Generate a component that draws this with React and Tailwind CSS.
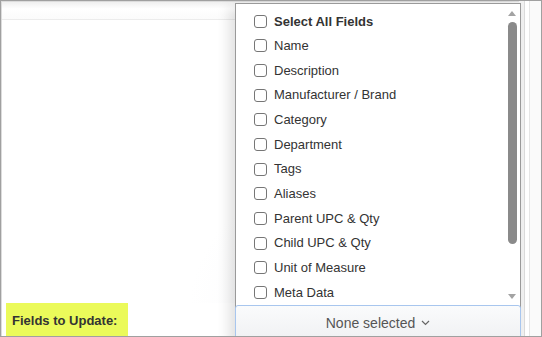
import React from "react";

const fields = [
  "Name",
  "Description",
  "Manufacturer / Brand",
  "Category",
  "Department",
  "Tags",
  "Aliases",
  "Parent UPC & Qty",
  "Child UPC & Qty",
  "Unit of Measure",
  "Meta Data",
];

const Box = () => (
  <span className="w-[13px] h-[13px] shrink-0 rounded-[3px] border border-[#767676] bg-white" />
);

const FieldMenu = () => (
  <div className="absolute left-[234px] top-[2px] w-[286px] h-[340px] flex flex-col border border-[#9a9a9a] bg-white shadow-[-6px_4px_12px_rgba(0,0,0,0.12)]">
    <div className="relative h-[301px] overflow-hidden">
      <ul className="pt-[5px] pl-[18px]">
        <li className="flex items-center gap-[7px] h-[24.65px]">
          <Box />
          <span className="font-bold">Select All Fields</span>
        </li>
        {fields.map((f) => (
          <li key={f} className="flex items-center gap-[7px] h-[24.65px]">
            <Box />
            <span>{f}</span>
          </li>
        ))}
      </ul>
      <div className="absolute right-[2px] top-0 bottom-0 w-[12px] flex flex-col items-center">
        <svg width="10" height="10" viewBox="0 0 10 10" className="mt-[4px]">
          <path d="M1 8 L5 3 L9 8 Z" fill="#a3a3a3" />
        </svg>
        <div className="mt-[4px] w-[9px] h-[222px] rounded-full bg-[#8a8a8a]" />
        <div className="flex-1" />
        <svg width="10" height="10" viewBox="0 0 10 10" className="mb-[3px]">
          <path d="M1 2 L9 2 L5 7 Z" fill="#a3a3a3" />
        </svg>
      </div>
    </div>
    <button className="h-[36px] mx-[-1px] border border-[#a8c6ee] rounded-t-[3px] bg-[linear-gradient(#fafbfc,#f0f1f3)] flex items-center justify-center gap-[6px] text-[14px] text-[#555]">
      <span>None selected</span>
      <svg width="9" height="6" viewBox="0 0 9 6">
        <path d="M1 1 L4.5 4.5 L8 1" fill="none" stroke="#666" strokeWidth="1.2" />
      </svg>
    </button>
  </div>
);

export default function App() {
  return (
    <div
      className="relative w-[542px] h-[337px] overflow-hidden bg-white border border-[#a0a0a0] text-[13px] text-[#333]"
      style={{ fontFamily: '"Liberation Sans", Arial, sans-serif' }}
    >
      <div className="flex h-full">
        <div className="flex-1 flex flex-col border-l border-t border-[#dcdcdc]">
          <div className="h-[18px] border-b border-[#ececec] bg-[linear-gradient(#f0f0f0,#ffffff_40%,#fbfbfb)]" />
          <div className="flex-1 bg-[radial-gradient(ellipse_at_100%_100%,#eeeff3_0%,#ffffff_45%)]" />
          <div className="flex">
            <div className="ml-[4px] w-[122px] h-[33px] bg-[#ebfa5a] flex items-center pl-[6px] pt-[3px] text-[13px] font-bold text-[#333]">
              Fields to Update:
            </div>
          </div>
        </div>
        <div className="w-[22px] flex">
          <div className="w-[5px] bg-[#f2f2f2]" />
          <div className="w-[5px] border-l border-[#dcdcdc] bg-white" />
          <div className="flex-1 border-l border-[#e6e6e6] bg-[#fafafa]" />
        </div>
      </div>
      <FieldMenu />
    </div>
  );
}
